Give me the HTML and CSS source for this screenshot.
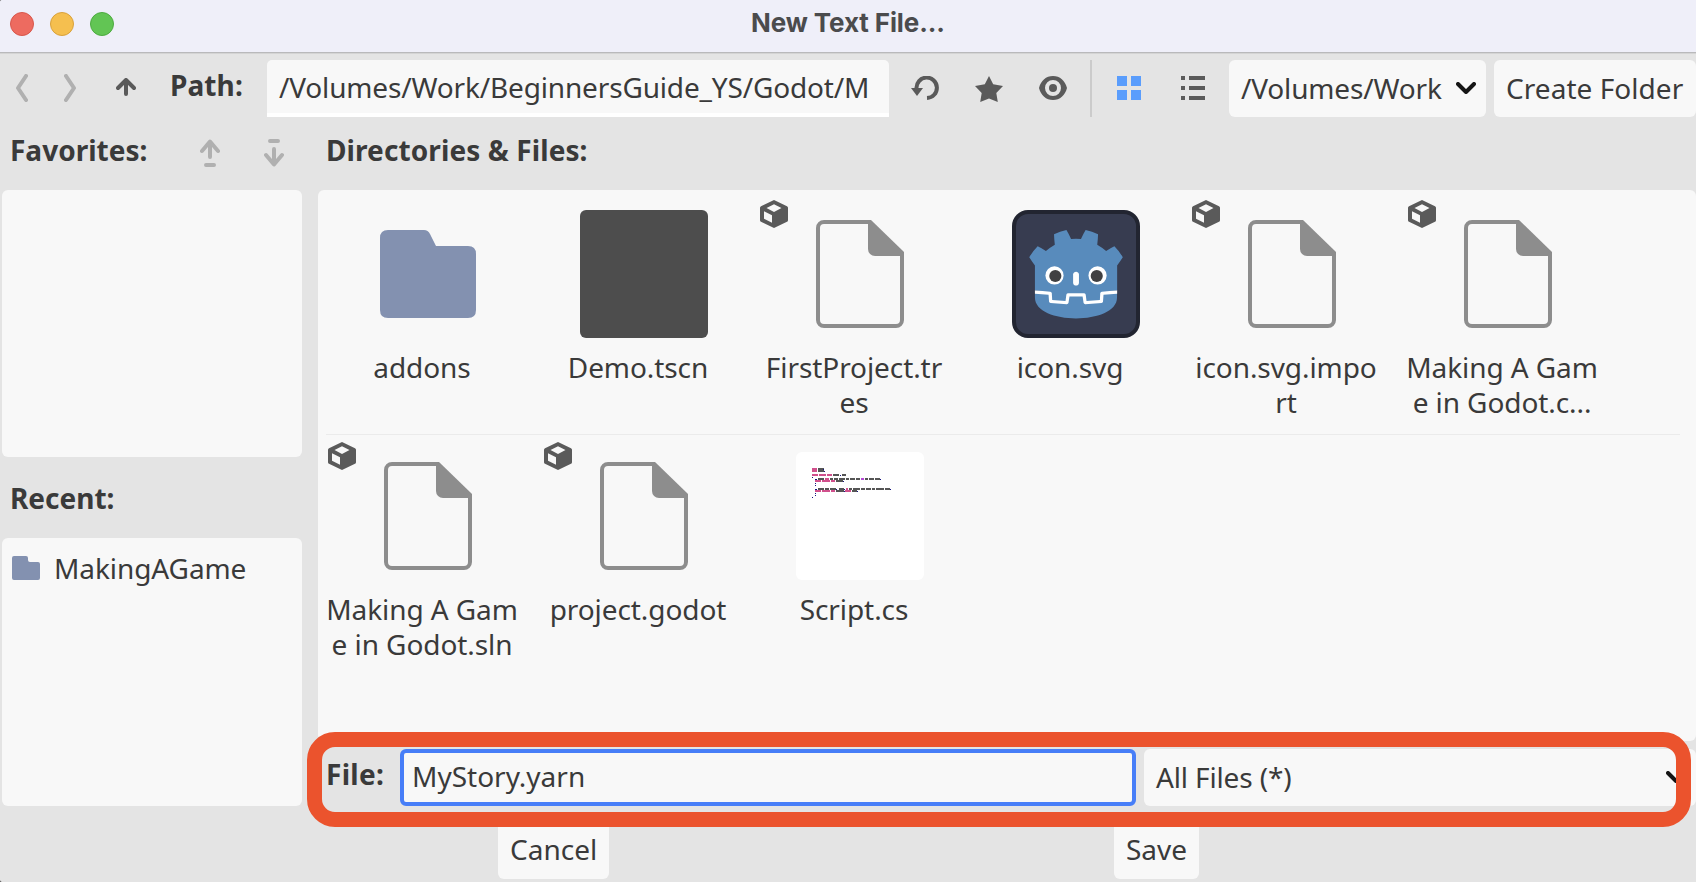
FILE: index.html
```html
<!DOCTYPE html>
<html lang="en">
<head>
<meta charset="utf-8">
<title>New Text File...</title>
<link rel="stylesheet" href="styles.css">
</head>
<body>
<svg class="defs" width="0" height="0">
  <symbol id="file" viewBox="0 0 88 108">
    <path d="M55 2H8a6 6 0 0 0-6 6v92a6 6 0 0 0 6 6h72a6 6 0 0 0 6-6V34" fill="none" stroke="#8d8d8d" stroke-width="4"/>
    <path d="M52 0h3L88 32v4H59a7 7 0 0 1-7-7z" fill="#8d8d8d"/>
  </symbol>
  <symbol id="cube" viewBox="0 0 28 28">
    <path fill-rule="evenodd" fill="#5a5a5a" d="M14 0 27 6.2q1 .5 1 1.5v12.6q0 1-1 1.5L14 28 1 21.8q-1-.5-1-1.5V7.700q0-1 1-1.500zM14 4.200 6.500 8 14 12l7.500-4zM4 11.300v7.500L12 22.800v-7.500z"/>
  </symbol>
  <symbol id="chevron" viewBox="0 0 20 12">
    <path d="M2 2l8 8 8-8" fill="none" stroke="#151515" stroke-width="4" stroke-linecap="round" stroke-linejoin="round"/>
  </symbol>
</svg>
<div class="dialog">
  <header class="titlebar">
    <div class="lights"><i class="light red"></i><i class="light yellow"></i><i class="light green"></i></div>
    <h1 class="title">New Text File...</h1>
  </header>

  <div class="toolbar">
    <svg class="ico back" width="12" height="28" viewBox="0 0 12 28"><path d="M10 2 2 14l8 12"/></svg>
    <svg class="ico forward" width="12" height="28" viewBox="0 0 12 28"><path d="M2 2l8 12-8 12"/></svg>
    <svg class="ico up" width="20" height="18" viewBox="0 0 20 18"><path d="M10 16V3M2 10l8-8 8 8"/></svg>
    <span class="heading path-label">Path:</span>
    <div class="path-input">/Volumes/Work/BeginnersGuide_YS/Godot/M</div>
    <svg class="refresh" width="28" height="24" viewBox="0 0 28 24"><path d="M5.500 12.500A10.200 10.200 0 1 1 16 22" fill="none" stroke="#5a5a5a" stroke-width="4"/><path d="M0 12h12l-6 8z" fill="#5a5a5a"/></svg>
    <svg class="star" width="28" height="26" viewBox="0 0 28 26"><path d="M14 0l4.200 8.200L28 10l-6.700 7 1.500 9L14 22.500 5.200 26l1.500-9L0 10l9.800-1.800z" fill="#5a5a5a"/></svg>
    <svg class="eye" width="28" height="24" viewBox="0 0 28 24"><path fill-rule="evenodd" d="M14 0C7 0 2 4.500 0 12c2 7.500 7 12 14 12s12-4.500 14-12C26 4.500 21 0 14 0zm0 4a8 8 0 1 1 0 16 8 8 0 0 1 0-16z" fill="#5a5a5a"/><circle cx="14" cy="12" r="4" fill="#5a5a5a"/></svg>
    <div class="divider"></div>
    <svg class="grid-view" width="24" height="24"><path d="M0 0h10v10H0zM14 0h10v10H14zM0 14h10v10H0zM14 14h10v10H14z" fill="#5a9dfc"/></svg>
    <svg class="list-view" width="24" height="24"><path d="M0 0h4v4H0zM8 0h16v4H8zM0 10h4v4H0zM8 10h16v4H8zM0 20h4v4H0zM8 20h16v4H8z" fill="#5a5a5a"/></svg>
    <div class="button drive">/Volumes/Work<svg width="20" height="12"><use href="#chevron"/></svg></div>
    <div class="button create">Create Folder</div>
  </div>

  <div class="content">
    <aside class="side">
      <div class="side-head">
        <span class="heading">Favorites:</span>
        <svg class="ico fav-up" width="20" height="28" viewBox="0 0 20 28"><path d="M10 18V3M2 12l8-9.500L18 12M6 26h8"/></svg>
        <svg class="ico fav-down" width="20" height="28" viewBox="0 0 20 28"><path d="M10 10v15M2 16l8 9.500L18 16M6 2h8"/></svg>
      </div>
      <div class="panel favorites"></div>
      <div class="heading recent-head">Recent:</div>
      <div class="panel recent">
        <div class="recent-item">
          <svg width="28" height="24" viewBox="0 0 28 24"><path d="M2 0h12q2 0 2 2v2q0 2 2 2h8q2 0 2 2v14q0 2-2 2H2q-2 0-2-2V2q0-2 2-2z" fill="#8391b0"/></svg>
          <span>MakingAGame</span>
        </div>
      </div>
    </aside>

    <main class="main">
      <div class="heading main-head">Directories &amp; Files:</div>
      <div class="panel files">
        <div class="row">
          <div class="item"><div class="thumb"><svg width="96" height="88" viewBox="0 0 96 88"><path d="M8 0h36q4 0 6 4l6 12h32q8 0 8 8v56q0 8-8 8H8q-8 0-8-8V8q0-8 8-8z" fill="#8391b0"/></svg></div><div class="name">addons</div></div>
          <div class="item"><div class="thumb scene"></div><div class="name">Demo.tscn</div></div>
          <div class="item"><svg class="cube"><use href="#cube"/></svg><div class="thumb"><svg width="88" height="108"><use href="#file"/></svg></div><div class="name">FirstProject.tr<br>es</div></div>
          <div class="item"><div class="thumb">
            <svg width="128" height="128" viewBox="0 0 128 128"><rect x="2" y="2" width="124" height="124" rx="14" fill="#373c50" stroke="#222531" stroke-width="4"/><g transform="scale(.101) translate(122 122)"><g fill="#fff"><path d="M105 673v33q407 354 814 0v-33z"/><path fill="#588bbc" d="m105 673 152 14q12 1 15 14l4 67 132 10 8-61q2-11 15-15h162q13 4 15 15l8 61 132-10 4-67q3-13 15-14l152-14V427q30-39 56-81-35-59-83-108-43 20-82 47-40-37-88-64 7-51 8-102-59-28-123-42-26 43-46 89-49-7-98 0-20-46-46-89-64 14-123 42 1 51 8 102-48 27-88 64-39-27-82-47-48 49-83 108 26 42 56 81zm0 33v39c0 276 813 276 813 0v-39l-134 12-5 69q-2 10-14 13l-162 11q-12 0-16-11l-10-65H447l-10 65q-4 11-16 11l-162-11q-12-3-14-13l-5-69z"/><path d="M483 600c3 34 55 34 58 0v-86c-3-34-55-34-58 0z"/><circle cx="725" cy="526" r="90"/><circle cx="299" cy="526" r="90"/></g><g fill="#414042"><circle cx="307" cy="532" r="60"/><circle cx="717" cy="532" r="60"/></g></g></svg>
          </div><div class="name">icon.svg</div></div>
          <div class="item"><svg class="cube"><use href="#cube"/></svg><div class="thumb"><svg width="88" height="108"><use href="#file"/></svg></div><div class="name">icon.svg.impo<br>rt</div></div>
          <div class="item"><svg class="cube"><use href="#cube"/></svg><div class="thumb"><svg width="88" height="108"><use href="#file"/></svg></div><div class="name">Making A Gam<br>e in Godot.c...</div></div>
        </div>
        <div class="rule"></div>
        <div class="row second">
          <div class="item"><svg class="cube"><use href="#cube"/></svg><div class="thumb"><svg width="88" height="108"><use href="#file"/></svg></div><div class="name">Making A Gam<br>e in Godot.sln</div></div>
          <div class="item"><svg class="cube"><use href="#cube"/></svg><div class="thumb"><svg width="88" height="108"><use href="#file"/></svg></div><div class="name">project.godot</div></div>
          <div class="item"><div class="thumb script">
            <svg width="128" height="128" viewBox="0 0 128 128" fill="none" stroke-width="2">
              <g stroke="#d0508c">
                <path d="M16 17h5M16 19h5M16 23h6M23 23h7M31 23h5M29 27h4M19 29h6M26 29h8M35 29h4M50 37h2M19 39h6M26 39h8M35 39h4M49 39h6"/>
              </g>
              <path stroke="#b44ad6" d="M65 27h3"/>
              <g stroke="#555">
                <path d="M22 17h6M22 19h6M37 23h6M46 23h4M22 27h6M34 27h3M38 27h4M43 27h6M50 27h3M54 27h5M60 27h4M69 27h3M73 27h5M79 27h5M40 29h7M22 37h6M29 37h4M34 37h6M43 37h5M53 37h3M57 37h7M65 37h4M70 37h5M76 37h3M80 37h8M89 37h5M40 39h8M56 39h5"/>
              </g>
              <g stroke="#151580">
                <path stroke-width="1" d="M27 17.500h1M28 19.500h1M44 23.500h1M16 25.500h1M19 27.500h2M84 27.500h1M47 29.500h1M19 31.500h1M19 33.500h1M19 37.500h2M40 37.500h1M48 37.500h1M94 37.500h1M48 39.500h1M61 39.500h1M19 41.500h1M19 43.500h1M16 45.500h1"/>
              </g>
            </svg>
          </div><div class="name">Script.cs</div></div>
        </div>
      </div>
      <div class="file-row">
        <span class="heading file-label">File:</span>
        <div class="file-input">MyStory.yarn</div>
        <div class="button filter">All Files (*)<svg width="20" height="12"><use href="#chevron"/></svg></div>
        <div class="highlight"></div>
      </div>
    </main>
  </div>

  <footer class="actions">
    <div class="button cancel">Cancel</div>
    <div class="button save">Save</div>
  </footer>
</div>
</body>
</html>
```

FILE: styles.css
```css
* { box-sizing: border-box; }
body {
  margin: 0;
  background: #333;
  overflow: hidden;
  font: 28px/57px "Noto Sans", sans-serif;
  color: #3a3a3a;
  white-space: nowrap;
}
svg { display: block; flex: none; }
.defs { position: absolute; }
.dialog {
  width: 1696px;
  height: 882px;
  background: #e4e4e4;
  border-radius: 2px 0 0 2px;
  overflow: hidden;
  display: flex;
  flex-direction: column;
}
.titlebar {
  height: 54px;
  flex: none;
  display: grid;
  grid-template-columns: 1fr auto 1fr;
  background: #efeff9;
  border-bottom: 1px solid #d4d4d4;
  box-shadow: inset 0 -1px #b9b9bb;
}
.lights { display: flex; gap: 16px; padding: 12px 0 0 10px; }
.light { width: 24px; height: 24px; border-radius: 50%; border: 1px solid; }
.red { background: #ed6b60; border-color: #d8564b; }
.yellow { background: #f5bf4f; border-color: #d9a13b; }
.green { background: #62c554; border-color: #4dab40; }
.title {
  margin: 0;
  font: 700 26px/46px Inter, sans-serif;
  letter-spacing: -0.1px;
  color: #4b4b4d;
}
.toolbar {
  height: 63px;
  flex: none;
  padding-top: 6px;
  display: flex;
  align-items: flex-start;
}
.heading { font-weight: 700; letter-spacing: 0.1px; }
.ico { fill: none; stroke: #b0b0b0; stroke-width: 4; stroke-linecap: round; stroke-linejoin: round; }
.back { margin: 14px 0 0 16px; }
.forward { margin: 14px 0 0 36px; }
.up { margin: 18px 0 0 40px; stroke: #5a5a5a; }
.path-label { width: 97px; margin-left: 34px; line-height: 51px; }
.path-input {
  width: 622px;
  height: 57px;
  padding-left: 12px;
  line-height: 55px;
  letter-spacing: -0.16px;
  background: #f8f8f8;
  border-bottom: 4px solid #fff;
  border-radius: 5px 5px 0 0;
}
.refresh { margin: 16px 0 0 22px; }
.star { margin: 16px 0 0 36px; }
.eye { margin: 16px 0 0 36px; }
.divider { width: 2px; height: 57px; margin-left: 23px; background: #cbcbcb; }
.grid-view { margin: 16px 0 0 25px; }
.list-view { margin: 16px 0 0 40px; }
.button { height: 57px; background: #f8f8f8; border-radius: 6px; flex: none; }
.drive {
  width: 257px;
  margin-left: 24px;
  padding: 0 10px 0 12px;
  letter-spacing: -0.16px;
  display: flex;
  justify-content: space-between;
}
.drive svg { margin-top: 22px; }
.create { width: 202px; margin-left: 8px; padding-left: 12px; letter-spacing: 0.05px; }
.content {
  position: relative;
  z-index: 1;
  display: flex;
  gap: 16px;
  padding-left: 2px;
  flex: none;
  height: 705px;
}
.side { width: 300px; }
.side-head { height: 73px; display: flex; padding: 0 18px 0 8px; }
.side-head .heading { line-height: 67px; letter-spacing: 0; }
.fav-up { margin: 22px 0 0 auto; }
.fav-down { margin: 22px 0 0 44px; }
.panel { background: #f8f8f8; border-radius: 6px; }
.favorites { height: 267px; }
.recent-head { height: 81px; line-height: 83px; padding-left: 8px; letter-spacing: 0; }
.recent { height: 268px; padding: 18px 10px; }
.recent-item { display: flex; gap: 14px; line-height: 24px; letter-spacing: -0.08px; }
.main { flex: none; width: 1378px; }
.main-head { height: 73px; line-height: 67px; padding: 0 0 0 8px; }
.files { height: 551px; padding-top: 20px; }
.row { display: flex; gap: 16px; padding-left: 4px; height: 224px; }
.rule { height: 1px; margin: 0 16px 0 8px; background: #ebebeb; }
.second { margin-top: 17px; }
.item { position: relative; width: 200px; }
.cube { position: absolute; left: 6px; top: -10px; width: 28px; height: 28px; }
.thumb {
  width: 128px;
  height: 128px;
  margin-left: 42px;
  display: flex;
  align-items: center;
  justify-content: center;
}
.scene { background: #4d4d4d; border-radius: 6px; }
.script { background: #fff; border-radius: 6px; }
.name { margin-top: 12px; line-height: 35px; text-align: center; letter-spacing: -0.08px; }
.file-row {
  position: relative;
  display: flex;
  padding: 8px 0 0 8px;
}
.file-label { width: 74px; line-height: 51px; letter-spacing: 0.3px; }
.file-input {
  width: 736px;
  height: 57px;
  padding-left: 8px;
  line-height: 47px;
  background: #f8f8f8;
  border: 4px solid #477ef8;
  border-radius: 6px;
}
.filter {
  flex: 1;
  margin-left: 8px;
  padding: 0 10px 0 12px;
  letter-spacing: -0.14px;
  display: flex;
  justify-content: space-between;
}
.filter svg { margin-top: 22px; }
.highlight {
  position: absolute;
  left: -11px;
  top: -9px;
  width: 1384px;
  height: 95px;
  border: 15px solid #eb532d;
  border-radius: 28px;
}
.actions { display: flex; }
.cancel { width: 111px; margin-left: 498px; padding-left: 12px; }
.save { width: 85px; margin-left: 505px; padding-left: 12px; }
.actions .button { height: 58px; margin-top: -1px; line-height: 57px; }
```
